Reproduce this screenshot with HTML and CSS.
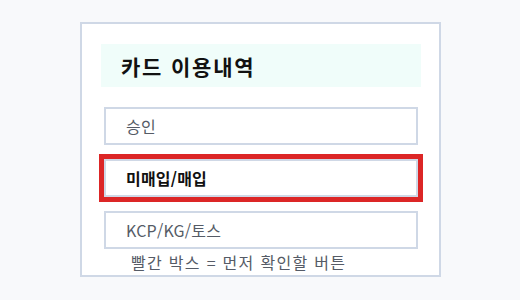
FILE: index.html
```html
<!DOCTYPE html>
<html lang="ko">
<head>
<meta charset="utf-8">
<link rel="stylesheet" href="styles.css">
</head>
<body>
<div class="card">
  <div class="header">카드 이용내역</div>
  <div class="btn">승인</div>
  <div class="btn btn-hl">미매입/매입</div>
  <div class="btn">KCP/KG/토스</div>
  <div class="caption">빨간 박스 = 먼저 확인할 버튼</div>
</div>
</body>
</html>
```

FILE: styles.css
```css
html, body {
  margin: 0;
  padding: 0;
  background: #f8f9fb;
}
body {
  width: 520px;
  height: 300px;
  padding-top: 22px;
  box-sizing: border-box;
  font-family: "Noto Sans CJK KR", "Noto Sans", sans-serif;
}
.card {
  margin-left: 80px;
  width: 361px;
  height: 255px;
  box-sizing: border-box;
  border: 2px solid #cfd8e6;
  background: #ffffff;
  padding: 20px 18px 0 19px;
  display: flex;
  flex-direction: column;
}
.header {
  height: 43px;
  background: #f0fdfa;
  display: flex;
  align-items: center;
  padding-left: 20px;
  font-size: 21px;
  letter-spacing: 1.8px;
  font-weight: 700;
  color: #111111;
}
.btn {
  margin: 0 3px;
  height: 38px;
  box-sizing: border-box;
  border: 2px solid #cfd8e6;
  display: flex;
  align-items: center;
  padding-left: 20px;
  font-size: 16px;
  letter-spacing: 0.2px;
  color: #555b66;
  margin-top: 14px;
}
.header + .btn {
  margin-top: 20px;
}
.btn-hl {
  outline: 5px solid #dc2626;
  outline-offset: 0;
  font-weight: 700;
  color: #111111;
}
.caption {
  margin-top: 1px;
  padding-left: 30px;
  font-size: 16px;
  letter-spacing: 1.3px;
  line-height: 24px;
  color: #555b66;
}
```
